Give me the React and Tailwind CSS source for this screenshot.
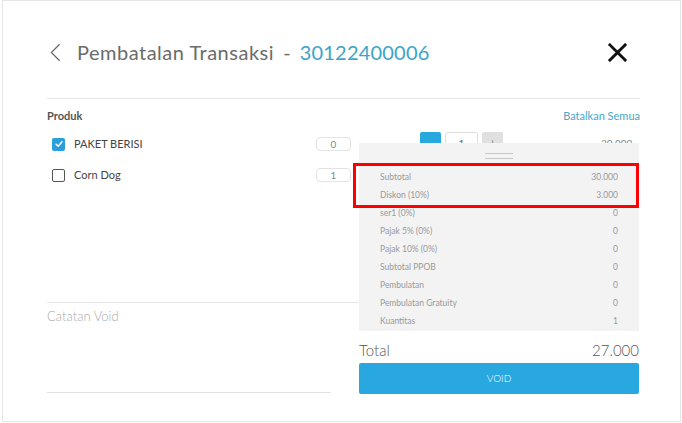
const products = [
  { name: "PAKET BERISI", checked: true, qty: "0" },
  { name: "Corn Dog", checked: false, qty: "1" },
];

const summary = [
  ["Subtotal", "30.000"],
  ["Diskon (10%)", "3.000"],
  ["ser1 (0%)", "0"],
  ["Pajak 5% (0%)", "0"],
  ["Pajak 10% (0%)", "0"],
  ["Subtotal PPOB", "0"],
  ["Pembulatan", "0"],
  ["Pembulatan Gratuity", "0"],
  ["Kuantitas", "1"],
];

function Checkbox({ checked }) {
  if (checked) {
    return (
      <span className="flex h-[13px] w-[13px] items-center justify-center rounded-[2px] bg-[#2b9fdc]">
        <svg viewBox="0 0 12 12" className="h-[10px] w-[10px]" fill="none" stroke="white" strokeWidth="1.8" strokeLinecap="round" strokeLinejoin="round">
          <path d="M2.5 6.2 L5 8.6 L9.6 3.4" />
        </svg>
      </span>
    );
  }
  return <span className="block h-[13px] w-[13px] rounded-[2px] border-[1.5px] border-[#555]" />;
}

export default function App() {
  return (
    <div className="h-[423px] w-[682px] bg-white pl-[2px] font-['Lato',sans-serif]">
      <div className="relative h-[422px] w-[679px] border border-[#e6e6e6] pl-[44px] pr-[40px]">
        {/* header */}
        <div className="flex h-[97px] items-center pt-[5px]">
          <svg viewBox="0 0 12 20" className="ml-[3px] h-[19px] w-[11px]" fill="none" stroke="#666" strokeWidth="1.3">
            <path d="M10.5 1 L1.5 10 L10.5 19" />
          </svg>
          <h1 className="ml-[16px] text-[20px] leading-[24px] text-[#6b6b6b]">
            <span className="tracking-[0.5px]">Pembatalan Transaksi</span> <span className="mx-[4px]">-</span>{" "}
            <span className="tracking-[0.2px] text-[#3ba4c9]">30122400006</span>
          </h1>
          <svg viewBox="0 0 20 20" className="ml-auto mr-[13px] h-[19px] w-[19px]" fill="none" stroke="#111" strokeWidth="3" strokeLinecap="square">
            <path d="M2 2 L18 18 M18 2 L2 18" />
          </svg>
        </div>
        <div className="h-px bg-[#e6e6e6]" />

        {/* products */}
        <div className="mt-[9px] flex h-[16px] items-center justify-between text-[11px]">
          <span className="font-bold text-[#555]">Produk</span>
          <span className="text-[#47a6c8]">Batalkan Semua</span>
        </div>
        <div className="mt-[10px] flex flex-col gap-[11px]">
          {products.map((p, i) => (
            <div key={p.name} className="flex h-[20px] items-center">
              <span className="ml-[5px]">
                <Checkbox checked={p.checked} />
              </span>
              <span className="ml-[9px] text-[11px] text-[#444]">{p.name}</span>
              <span className="ml-auto mr-[289px] flex h-[14px] w-[35px] items-center justify-center rounded-[4px] border border-[#e3e3e3] text-[10px] text-[#888]">
                {p.qty}
              </span>
              {i === 0 && (
                <div className="absolute left-[417px] top-[131px] flex items-center gap-[4px]">
                  <span className="flex h-[22px] w-[21px] items-center justify-center rounded-[2px] bg-[#29a8e0] text-[12px] text-white">-</span>
                  <span className="flex h-[22px] w-[33px] items-center justify-center rounded-[3px] border border-[#ddd] bg-white text-[10px] text-[#666]">1</span>
                  <span className="flex h-[22px] w-[21px] items-center justify-center rounded-[2px] bg-[#e0e0e0] text-[12px] text-[#888]">+</span>
                  <span className="ml-[94px] text-[10px] text-[#888]">30.000</span>
                </div>
              )}
            </div>
          ))}
        </div>

        {/* void note */}
        <div className="mt-[117px] w-[312px] border-t border-[#e6e6e6]">
          <p className="pt-[5px] text-[13px] font-light leading-[16px] text-[#aaa]">Catatan Void</p>
          <div className="h-[69px] w-[284px] border-b border-[#e3e3e3]" />
        </div>

        {/* summary sheet */}
        <div className="absolute left-[356px] top-[142px] w-[280px]">
          <div className="bg-[#f3f3f3] pb-[1px]">
            <div className="flex flex-col items-center gap-[4px] pt-[10px]">
              <span className="block h-px w-[28px] bg-[#c8c8c8]" />
              <span className="block h-px w-[28px] bg-[#c8c8c8]" />
            </div>
            <div className="mt-[9px]">
              {summary.map(([label, value]) => (
                <div key={label} className="flex h-[18px] items-center justify-between pl-[21px] pr-[21px] text-[8.5px] text-[#999]">
                  <span>{label}</span>
                  <span>{value}</span>
                </div>
              ))}
            </div>
          </div>
          <div className="flex h-[32px] justify-between pt-[9px] text-[15px] font-light leading-[20px] text-[#555]">
            <span>Total</span>
            <span>27.000</span>
          </div>
          <button className="flex h-[31px] w-full items-center justify-center rounded-[2px] bg-[#29a8e0] text-[10px] font-light text-white">
            VOID
          </button>
        </div>

        {/* annotation box */}
        <div className="pointer-events-none absolute left-[350px] top-[162px] h-[45px] w-[286px] border-[3px] border-[#f00]" />
      </div>
    </div>
  );
}
